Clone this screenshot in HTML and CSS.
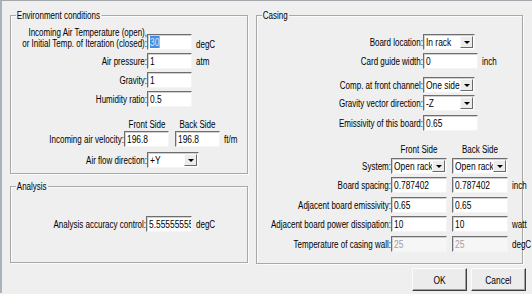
FILE: index.html
```html
<!DOCTYPE html>
<html lang="en">
<head>
    <meta charset="UTF-8">
    <title>Board Environment</title>
    <link rel="stylesheet" href="styles.css">
</head>
<body>
<div class="dialog">
    <div class="left-col">
        <div class="group env">
            <span class="group-title">Environment conditions</span>

            <div class="row temp-row">
                <label class="lbl w-env">Incoming Air Temperature (open),<br>or Initial Temp. of Iteration (closed):</label>
                <div class="edit w45"><span class="t"><span class="sel">30</span></span></div>
                <span class="unit">degC</span>
            </div>
            <div class="row mt3">
                <label class="lbl w-env">Air pressure:</label>
                <div class="edit w45"><span class="t">1</span></div>
                <span class="unit">atm</span>
            </div>
            <div class="row mt3">
                <label class="lbl w-env">Gravity:</label>
                <div class="edit w45"><span class="t">1</span></div>
            </div>
            <div class="row mt3">
                <label class="lbl w-env">Humidity ratio:</label>
                <div class="edit w45"><span class="t">0.5</span></div>
            </div>
            <div class="row heads env-heads">
                <span class="head w45">Front Side</span>
                <span class="head w45">Back Side</span>
            </div>
            <div class="row">
                <label class="lbl w-vel">Incoming air velocity:</label>
                <div class="edit w45"><span class="t">196.8</span></div>
                <div class="edit w45 ml6"><span class="t">196.8</span></div>
                <span class="unit ml5">ft/m</span>
            </div>
            <div class="row mt5">
                <label class="lbl w-env">Air flow direction:</label>
                <div class="combo w52"><span class="val"><span class="t">+Y</span></span><span class="drop"></span></div>
            </div>
        </div>

        <div class="group analysis">
            <span class="group-title">Analysis</span>
            <div class="row acc-row">
                <label class="lbl w-acc">Analysis accuracy control:</label>
                <div class="edit w46"><span class="t">5.5555555556</span></div>
                <span class="unit ml7">degC</span>
            </div>
        </div>
    </div>

    <div class="right-col">
        <div class="group casing">
            <span class="group-title">Casing</span>

            <div class="row mt12">
                <label class="lbl w-cas">Board location:</label>
                <div class="combo w52"><span class="val"><span class="t">In rack</span></span><span class="drop"></span></div>
            </div>
            <div class="row mt3">
                <label class="lbl w-cas">Card guide width:</label>
                <div class="edit w55"><span class="t">0</span></div>
                <span class="unit ml5">inch</span>
            </div>
            <div class="row mt8">
                <label class="lbl w-cas">Comp. at front channel:</label>
                <div class="combo w52"><span class="val"><span class="t">One side</span></span><span class="drop"></span></div>
            </div>
            <div class="row mt2">
                <label class="lbl w-cas">Gravity vector direction:</label>
                <div class="combo w52"><span class="val"><span class="t">-Z</span></span><span class="drop"></span></div>
            </div>
            <div class="row mt4">
                <label class="lbl w-cas">Emissivity of this board:</label>
                <div class="edit w55"><span class="t">0.65</span></div>
            </div>

            <div class="row heads cas-heads">
                <span class="head w56">Front Side</span>
                <span class="head w56">Back Side</span>
            </div>
            <div class="row mt2">
                <label class="lbl w-sys">System:</label>
                <div class="combo w56"><span class="val"><span class="t">Open rack</span></span><span class="drop"></span></div>
                <div class="combo w56 ml5"><span class="val"><span class="t">Open rack</span></span><span class="drop"></span></div>
            </div>
            <div class="row mt3">
                <label class="lbl w-sys">Board spacing:</label>
                <div class="edit w56"><span class="t">0.787402</span></div>
                <div class="edit w56 ml5"><span class="t">0.787402</span></div>
                <span class="unit ml4">inch</span>
            </div>
            <div class="row mt4">
                <label class="lbl w-sys">Adjacent board emissivity:</label>
                <div class="edit w56"><span class="t">0.65</span></div>
                <div class="edit w56 ml5"><span class="t">0.65</span></div>
            </div>
            <div class="row mt3">
                <label class="lbl w-sys">Adjacent board power dissipation:</label>
                <div class="edit w56"><span class="t">10</span></div>
                <div class="edit w56 ml5"><span class="t">10</span></div>
                <span class="unit ml4">watt</span>
            </div>
            <div class="row mt4">
                <label class="lbl w-sys">Temperature of casing wall:</label>
                <div class="edit w56 disabled"><span class="t">25</span></div>
                <div class="edit w56 ml5 disabled"><span class="t">25</span></div>
                <span class="unit ml4">degC</span>
            </div>
        </div>

        <div class="buttons">
            <button class="btn"><span class="t">OK</span></button>
            <button class="btn"><span class="t">Cancel</span></button>
        </div>
    </div>
</div>
</body>
</html>
```

FILE: styles.css
```css
body {
    margin: 0;
    padding: 0;
    background-color: #efefef;
    color: #000;
    font-family: "Liberation Sans", Arial, sans-serif;
    font-size: 10px;
    line-height: 11px;
}

.dialog {
    display: flex;
    gap: 8px;
    height: 293px;
    padding: 14px 0 0 8px;
    border-top: 1px solid #a4a7ab;
    border-left: 2px solid #a9b3bf;
    box-sizing: border-box;
}

.left-col {
    width: 238px;
}

.right-col {
    width: 270px;
}

/* the dialog font is a narrow one: squeeze the texts */
.t,
.lbl,
.unit,
.head,
.group-title {
    display: inline-block;
    transform: scaleX(0.8);
}

.t,
.unit,
.group-title {
    transform-origin: left center;
}

.lbl {
    transform-origin: right center;
}

.head {
    transform-origin: center center;
}

/* group boxes */
.group {
    border: 1px solid #a8a8a8;
    box-shadow: inset 1px 1px 0 #fbfbfb, 1px 1px 0 #fbfbfb;
    box-sizing: border-box;
}

.group .group-title {
    display: block;
    width: max-content;
    margin: -7px 0 0 5px;
    padding: 0 2px 0 1px;
    line-height: 13px;
    background-color: #efefef;
}

.env {
    height: 159px;
}

.analysis {
    height: 77px;
    margin-top: 12px;
}

.casing {
    width: 267px;
    height: 249px;
}

/* rows */
.row {
    display: flex;
    align-items: center;
    height: 16px;
}

.temp-row {
    height: 23px;
    margin-top: 5px;
    align-items: flex-end;
}

.temp-row .lbl {
    padding-bottom: 1px;
    text-align: right;
}

.acc-row {
    margin-top: 23px;
}

.heads {
    height: 13px;
    line-height: 13px;
}

.env-heads {
    margin-top: 11px;
    padding-left: 113px;
}

.env-heads .head + .head {
    margin-left: 6px;
}

.cas-heads {
    margin-top: 12px;
    padding-left: 134px;
}

.cas-heads .head + .head {
    margin-left: 5px;
}

.head {
    text-align: center;
    white-space: nowrap;
}

.lbl {
    display: flex;
    justify-content: flex-end;
    white-space: nowrap;
    flex-shrink: 0;
}

.w-env { width: 136px; }
.w-vel { width: 113px; }
.w-acc { width: 135px; }
.w-cas { width: 166px; }
.w-sys { width: 134px; }

.w45 { width: 45px; }
.w46 { width: 46px; }
.w52 { width: 52px; }
.w55 { width: 55px; }
.w56 { width: 56px; }

.mt2 { margin-top: 2px; }
.mt3 { margin-top: 3px; }
.mt4 { margin-top: 4px; }
.mt5 { margin-top: 5px; }
.mt8 { margin-top: 8px; }
.mt12 { margin-top: 12px; }
.ml4 { margin-left: 4px; }
.ml5 { margin-left: 5px; }
.ml6 { margin-left: 6px; }
.ml7 { margin-left: 7px; }

.unit {
    margin-left: 4px;
}

/* edit boxes */
.edit {
    height: 16px;
    box-sizing: border-box;
    padding: 1px 2px 0 2px;
    line-height: 13px;
    font-size: 10.5px;
    background-color: #fff;
    border: 1px solid;
    border-color: #6e6e6e #f4f4f4 #f4f4f4 #6e6e6e;
    box-shadow: inset 1px 1px 0 #d0d0d0;
    flex-shrink: 0;
    white-space: nowrap;
    overflow: hidden;
}

.edit.disabled {
    background-color: #f6f6f6;
    color: #a0a0a0;
}

.sel {
    background-color: #3f8ee0;
    color: #dfe9f5;
}

/* combo boxes */
.combo {
    display: flex;
    align-items: center;
    height: 16px;
    box-sizing: border-box;
    padding: 1px 1px 1px 2px;
    background-color: #fff;
    border: 1px solid;
    border-color: #6e6e6e #f4f4f4 #f4f4f4 #6e6e6e;
    box-shadow: inset 1px 1px 0 #d0d0d0;
    font-size: 10.5px;
    flex-shrink: 0;
    overflow: hidden;
}

.combo .val {
    flex: 1;
    min-width: 0;
    white-space: nowrap;
}

.drop {
    position: relative;
    width: 13px;
    height: 12px;
    box-sizing: border-box;
    background-color: #ececec;
    border: 1px solid;
    border-color: #fafafa #6a6a6a #6a6a6a #fafafa;
    flex-shrink: 0;
}

.drop::after {
    content: "";
    position: absolute;
    left: 3px;
    top: 4px;
    border-left: 3px solid transparent;
    border-right: 3px solid transparent;
    border-top: 3px solid #000;
}

/* buttons */
.buttons {
    display: flex;
    justify-content: flex-end;
    gap: 4px;
    margin-top: 4px;
}

.btn {
    width: 55px;
    height: 23px;
    padding: 0;
    font-family: inherit;
    font-size: 10.5px;
    color: #000;
    background-color: #ececec;
    border: 1px solid;
    border-color: #fbfbfb #3e3e3e #3e3e3e #fbfbfb;
    box-shadow: inset -1px -1px 0 #a0a0a0;
}

.btn .t {
    transform-origin: center center;
}
```
